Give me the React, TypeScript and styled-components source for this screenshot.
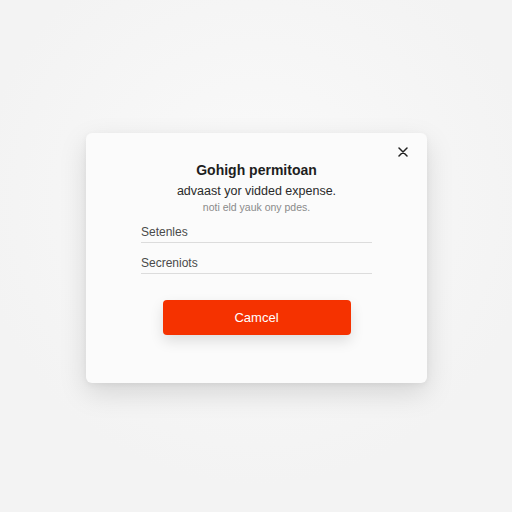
import React from "react";
import styled, { createGlobalStyle } from "styled-components";

const GlobalStyle = createGlobalStyle`
  html, body {
    margin: 0;
    padding: 0;
    background: #f4f4f4;
    font-family: "Liberation Sans", Arial, sans-serif;
  }
`;

const Page = styled.div`
  width: 512px;
  height: 512px;
  box-sizing: border-box;
  padding: 133px 0 0 86px;
  background: radial-gradient(circle at 50% 40%, #fafafa 0%, #f3f3f3 70%);
`;

const Card = styled.div`
  position: relative;
  width: 341px;
  height: 250px;
  box-sizing: border-box;
  padding: 27px 55px 0;
  background: #fbfbfb;
  border-radius: 6px;
  box-shadow: 0 10px 28px rgba(0, 0, 0, 0.13), 0 2px 6px rgba(0, 0, 0, 0.05);
  display: flex;
  flex-direction: column;
`;

const CloseButton = styled.button`
  position: absolute;
  top: 10px;
  right: 15px;
  width: 18px;
  height: 18px;
  padding: 0;
  border: none;
  background: none;
  display: flex;
  align-items: center;
  justify-content: center;
  cursor: pointer;
`;

const Title = styled.h2`
  margin: 0;
  text-align: center;
  font-size: 14px;
  line-height: 20px;
  font-weight: 700;
  color: #1e1e1e;
`;

const Subtitle = styled.p`
  margin: 2px 0 0;
  text-align: center;
  font-size: 12.5px;
  line-height: 18px;
  color: #2a2a2a;
`;

const Hint = styled.p`
  margin: 0;
  text-align: center;
  font-size: 10.5px;
  line-height: 14px;
  color: #8a8a8a;
`;

const Fields = styled.div`
  margin-top: 10px;
  display: flex;
  flex-direction: column;
  gap: 12px;
`;

const Field = styled.div`
  padding: 0 0 2px;
  border-bottom: 1px solid #dcdcdc;
  font-size: 12px;
  line-height: 16px;
  color: #4a4a4a;
`;

const Actions = styled.div`
  margin-top: 26px;
  display: flex;
  justify-content: center;
`;

const PrimaryButton = styled.button`
  width: 188px;
  height: 35px;
  border: none;
  border-radius: 4px;
  background: #f53200;
  color: #ffffff;
  font-family: "Liberation Sans", Arial, sans-serif;
  font-size: 13px;
  box-shadow: 0 6px 14px rgba(0, 0, 0, 0.12);
  cursor: pointer;
`;

export default function App() {
  return (
    <>
      <GlobalStyle />
      <Page>
        <Card>
          <CloseButton aria-label="Close">
            <svg width="10" height="10" viewBox="0 0 10 10">
              <path d="M1 1L9 9M9 1L1 9" stroke="#222" strokeWidth="1.5" strokeLinecap="round" />
            </svg>
          </CloseButton>
          <Title>Gohigh permitoan</Title>
          <Subtitle>advaast yor vidded expense.</Subtitle>
          <Hint>noti eld yauk ony pdes.</Hint>
          <Fields>
            <Field>Setenles</Field>
            <Field>Secreniots</Field>
          </Fields>
          <Actions>
            <PrimaryButton>Camcel</PrimaryButton>
          </Actions>
        </Card>
      </Page>
    </>
  );
}
